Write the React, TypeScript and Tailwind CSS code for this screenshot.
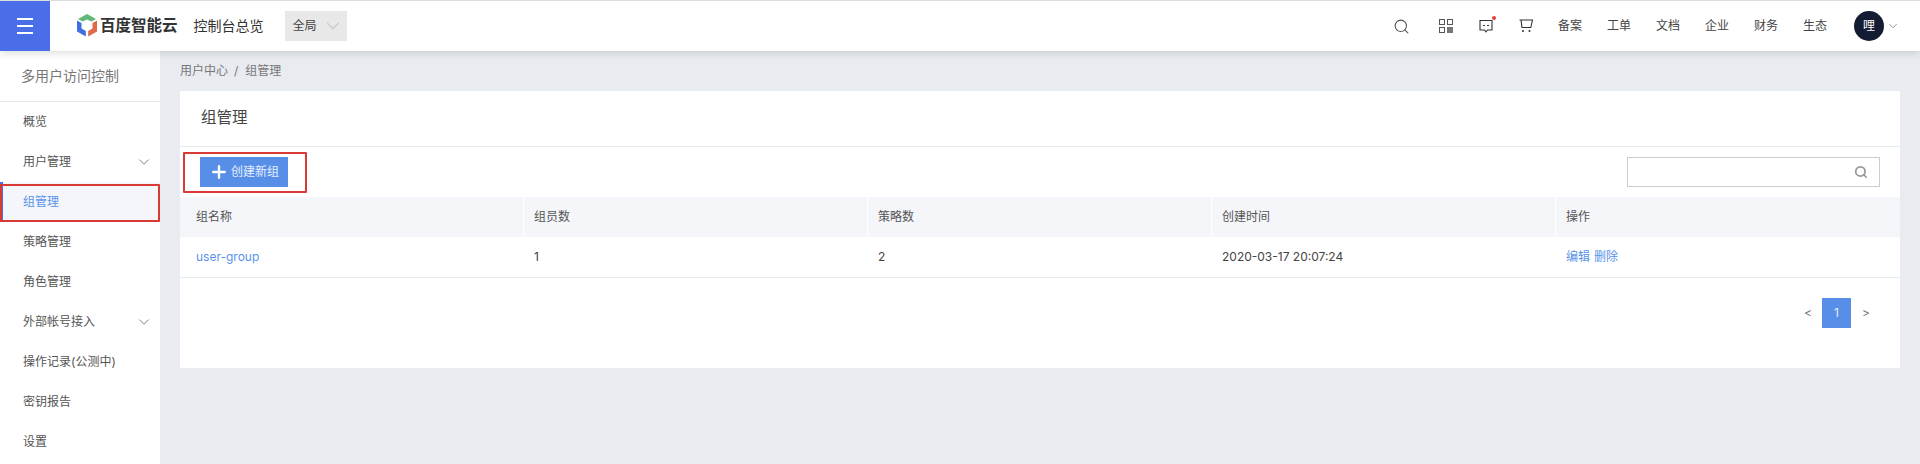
import { ChevronDown, Plus, Search } from 'lucide-react'

const MENU: { label: string; arrow?: boolean; active?: boolean }[] = [
  { label: '概览' },
  { label: '用户管理', arrow: true },
  { label: '组管理', active: true },
  { label: '策略管理' },
  { label: '角色管理' },
  { label: '外部帐号接入', arrow: true },
  { label: '操作记录(公测中)' },
  { label: '密钥报告' },
  { label: '设置' },
]

const TOP_LINKS = ['备案', '工单', '文档', '企业', '财务', '生态']
const COLUMNS = ['组名称', '组员数', '策略数', '创建时间', '操作']

function Logo() {
  return (
    <svg width="22" height="24" viewBox="0 0 22 24" className="shrink-0" aria-hidden="true">
      <path d="M11 0 L20 5 L15.500 7.500 L11 5.500 L6.500 7.500 L2 5 Z" fill="#5fb878" />
      <path d="M1 6.500 L5.500 9 L5.500 14.500 L9.800 17 L9.800 22.500 L1 17.500 Z" fill="#3f6fe0" />
      <path d="M21 6.500 L16.500 9 L16.500 14.500 L12.200 17 L12.200 22.500 L21 17.500 Z" fill="#e0694a" />
    </svg>
  )
}

function TopIcons() {
  return (
    <div className="flex items-center">
      <Search size={17} strokeWidth={1.5} className="mr-[29px] text-[#555]" />
      <svg width="14" height="14" viewBox="0 0 14 14" fill="none" className="mr-[26px]" aria-hidden="true">
        <rect x="0.500" y="0.500" width="5" height="5" stroke="#555" />
        <rect x="8.500" y="0.500" width="5" height="5" stroke="#555" />
        <rect x="0.500" y="8.500" width="5" height="5" stroke="#555" />
        <rect x="8" y="8" width="6" height="6" fill="#777" />
      </svg>
      <div className="relative mr-[26px] h-[14px] w-[14px]">
        <svg width="14" height="14" viewBox="0 0 14 14" fill="none" aria-hidden="true">
          <path d="M1 1.500 H13 V11 H8.500 L7 12.800 L5.500 11 H1 Z" stroke="#333" strokeWidth="1.100" />
          <path d="M4 6.500 H6 M8 6.500 H10" stroke="#333" />
        </svg>
        <span className="absolute -right-[3px] -top-[3px] h-[4px] w-[4px] rounded-full bg-[#e8403c]" />
      </div>
      <svg width="14" height="14" viewBox="0 0 14 14" fill="none" className="mr-[25px]" aria-hidden="true">
        <path d="M0.500 1 H13.500 L11.800 8.500 H3 L2 1" stroke="#333" strokeWidth="1.100" />
        <circle cx="4" cy="12" r="1" fill="#333" />
        <circle cx="10.500" cy="12" r="1" fill="#333" />
      </svg>
      <div className="flex gap-[25px] text-xs text-[#444]">
        {TOP_LINKS.map((t) => (
          <span key={t}>{t}</span>
        ))}
      </div>
    </div>
  )
}

export default function App() {
  return (
    <div className="relative flex h-[464px] w-[1920px] flex-col overflow-hidden bg-[#e8ebf0] font-['Inter','Noto_Sans_CJK_SC',sans-serif] text-xs text-[#444]">
      {/* header */}
      <header className="relative z-10 flex h-[51px] shrink-0 items-center border-t border-[#dcdde0] bg-white pr-[20px] shadow-[0_2px_8px_rgba(0,0,0,0.14)]">
        <div className="flex h-[50px] w-[50px] shrink-0 flex-col items-center justify-center gap-[5px] bg-[#4a6ee8]">
          <span className="h-[2px] w-[16px] bg-white" />
          <span className="h-[2px] w-[16px] bg-white" />
          <span className="h-[2px] w-[16px] bg-white" />
        </div>
        <div className="ml-[26px] flex items-center gap-[1px]">
          <Logo />
          <span className="ml-[1px] text-[15.500px] font-bold leading-none text-[#333]">百度智能云</span>
        </div>
        <span className="ml-[16px] text-sm text-[#333]">控制台总览</span>
        <div className="ml-[21px] flex h-[30px] w-[62px] items-center bg-[#e8e8e8] pl-[8px] text-[#444]">
          全局
          <ChevronDown size={22} strokeWidth={1.4} className="ml-[5px] text-[#ccc]" />
        </div>
        <div className="ml-auto flex items-center">
          <TopIcons />
          <div className="ml-[27px] flex h-[30px] w-[30px] items-center justify-center rounded-full bg-[#141c33] text-xs text-white">
            哩
          </div>
          <ChevronDown size={14} strokeWidth={1.5} className="ml-[2px] text-[#888]" />
        </div>
      </header>

      <div className="flex min-h-0 flex-1">
        {/* sidebar */}
        <aside className="w-[160px] shrink-0 bg-white">
          <div className="flex h-[51px] items-center border-b border-[#e8e8e8] pl-[21px] text-sm text-[#777]">
            多用户访问控制
          </div>
          {MENU.map((item) => (
            <div
              key={item.label}
              className={`relative flex h-[40px] items-center justify-between pl-[23px] pr-[7px] ${
                item.active ? 'bg-[#f4f6fb] text-[#5a93ea]' : 'text-[#555]'
              }`}
            >
              {item.active && <span className="absolute inset-y-0 left-0 w-[3px] bg-[#4a6ee8]" />}
              {item.label}
              {item.arrow && <ChevronDown size={18} strokeWidth={1.1} className="text-[#666]" />}
            </div>
          ))}
        </aside>

        {/* main */}
        <main className="flex-1 px-[20px]">
          <div className="flex h-[40px] items-center gap-[6px] text-[#777]">
            <span>用户中心</span>
            <span>/</span>
            <span className="ml-[1px]">组管理</span>
          </div>
          <div className="h-[277px] bg-white">
            <div className="flex h-[56px] items-center border-b border-[#e8ebf0] pl-[21px] text-[15.500px] text-[#444]">
              组管理
            </div>
            <div className="flex h-[50px] items-center justify-between pl-[20px] pr-[20px]">
              <button
                type="button"
                className="flex h-[30px] w-[88px] items-center justify-center gap-[2px] bg-[#578fe8] text-xs text-white/85"
              >
                <Plus size={20} strokeWidth={2.800} className="text-white" />
                创建新组
              </button>
              <div className="flex h-[30px] w-[253px] items-center justify-end border border-[#ccc] pr-[11px]">
                <Search size={14} strokeWidth={3} className="text-[#999]" />
              </div>
            </div>
            <div className="grid h-[40px] grid-cols-[343px_343px_343px_343px_1fr] gap-x-[1px] bg-white">
              {COLUMNS.map((c, i) => (
                <div
                  key={c}
                  className={`flex items-center bg-[#f4f6fa] text-[#555] ${i === 0 ? 'pl-[16px]' : 'pl-[10px]'}`}
                >
                  {c}
                </div>
              ))}
            </div>
            <div className="grid h-[41px] grid-cols-[343px_343px_343px_343px_1fr] gap-x-[1px] border-b border-[#e8ebf0] text-[#444]">
              <div className="flex items-center pl-[16px] text-[#5a93ea]">user-group</div>
              <div className="flex items-center pl-[10px]">1</div>
              <div className="flex items-center pl-[10px]">2</div>
              <div className="flex items-center pl-[10px]">2020-03-17 20:07:24</div>
              <div className="flex items-center gap-[4px] pl-[10px] text-[#5a93ea]">
                <span>编辑</span>
                <span>删除</span>
              </div>
            </div>
            <div className="flex items-center justify-end pr-[30px] pt-[20px] text-[#777]">
              <span className="mr-[10px]">&lt;</span>
              <span className="flex h-[30px] w-[29px] items-center justify-center bg-[#578fe8] text-white/85">1</span>
              <span className="ml-[11px]">&gt;</span>
            </div>
          </div>
        </main>
      </div>

      {/* red annotation boxes */}
      <div className="absolute left-0 top-[184px] z-20 h-[38px] w-[160px] rounded-[1px] border-2 border-[#d93a36]" />
      <div className="absolute left-[183px] top-[152px] z-20 h-[41px] w-[124px] rounded-[1px] border-2 border-[#d93a36]" />
    </div>
  )
}
